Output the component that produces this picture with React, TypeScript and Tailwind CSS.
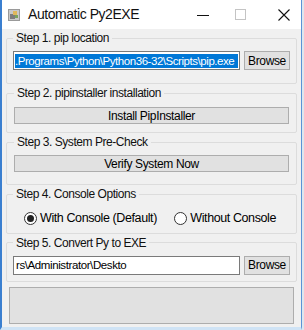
import React, { useState } from "react";

const font = { fontFamily: '"Liberation Sans", Arial, sans-serif' };

function Group({ title, children, className }: { title: string; children: React.ReactNode; className?: string }) {
  return (
    <fieldset className={`border border-[#dcdcdc] rounded-[2px] px-[6px] ${className ?? ""}`}>
      <legend className="px-[3px] text-[12px] leading-[14px] tracking-[-0.45px] text-[#111]">{title}</legend>
      {children}
    </fieldset>
  );
}

function Button({ label, className }: { label: string; className?: string }) {
  return (
    <div
      className={`h-[17px] bg-[#e1e1e1] border border-[#adadad] flex items-center justify-center text-[12px] tracking-[-0.35px] text-black ${className ?? ""}`}
    >
      {label}
    </div>
  );
}

function Radio({ checked, label, onClick }: { checked: boolean; label: string; onClick: () => void }) {
  return (
    <div className="flex items-center gap-[3px] cursor-default" onClick={onClick}>
      <span className="w-[13px] h-[13px] rounded-full border border-[#333] bg-white flex items-center justify-center">
        {checked && <span className="w-[7px] h-[7px] rounded-full bg-[#222]" />}
      </span>
      <span className="text-[12.5px] tracking-[-0.4px] text-black">{label}</span>
    </div>
  );
}

export default function App() {
  const [withConsole, setWithConsole] = useState(true);

  return (
    <div className="w-[304px] h-[330px] bg-[#dfe6ee] flex" style={font}>
      <div className="w-[302px] h-[330px] border-l-2 border-r border-b-[3px] border-l-[#3a7fd0] border-r-[#5b93d6] border-b-[#cfe3f5] flex flex-col">
        {/* title bar */}
        <div className="h-[29px] bg-white flex items-center shrink-0">
          <svg width="12" height="12" viewBox="0 0 12 12" className="ml-[6px] mr-[8px]">
            <rect x="0.5" y="0.5" width="11" height="11" fill="#c9c9c9" stroke="#9a9a9a" />
            <rect x="2" y="5" width="5" height="5" fill="#7d7d7d" />
            <rect x="5" y="2" width="4" height="4" fill="#e0b85a" />
            <rect x="7" y="6" width="3" height="3" fill="#7aa35c" />
          </svg>
          <span className="text-[14px] text-[#111] tracking-[-0.45px]">Automatic Py2EXE</span>
          <div className="ml-auto flex items-center">
            <svg width="12" height="12" viewBox="0 0 12 12" className="mr-[26px]">
              <line x1="0" y1="6.5" x2="12" y2="6.5" stroke="#111" strokeWidth="1" />
            </svg>
            <svg width="11" height="11" viewBox="0 0 11 11" className="mr-[32px]">
              <rect x="0.5" y="0.5" width="10" height="10" fill="none" stroke="#c4c4c4" />
            </svg>
            <svg width="12" height="12" viewBox="0 0 12 12" className="mr-[11px]">
              <path d="M0.5 0.5 L11.5 11.5 M11.5 0.5 L0.5 11.5" stroke="#111" strokeWidth="1.1" />
            </svg>
          </div>
        </div>

        {/* body */}
        <div className="flex-1 bg-[#f0f0f0] px-[4px] pt-[2px] flex flex-col gap-[2px]">
          <Group title="Step 1. pip location" className="pt-[6px] pb-[13px]">
            <div className="flex items-center gap-[4px]">
              <div className="w-[227px] shrink-0 h-[19px] bg-white border border-[#7a7a7a] flex items-center px-[1px] overflow-hidden">
                <span className="bg-[#0078d7] text-white text-[11.5px] leading-[14px] tracking-[-0.45px] whitespace-nowrap w-full">
                  .Programs\Python\Python36-32\Scripts\pip.exe
                </span>
              </div>
              <Button label="Browse" className="w-[46px] shrink-0 h-[19px]" />
            </div>
          </Group>

          <Group title="Step 2. pipinstaller installation" className="pt-[7px] pb-[8px] px-[7px]">
            <Button label="Install PipInstaller" />
          </Group>

          <Group title="Step 3. System Pre-Check" className="pt-[6px] pb-[12px] px-[7px]">
            <Button label="Verify System Now" />
          </Group>

          <Group title="Step 4. Console Options" className="pt-[8px] pb-[5px]">
            <div className="flex items-center pl-[11px] pr-[14px]">
              <Radio checked={withConsole} label="With Console (Default)" onClick={() => setWithConsole(true)} />
              <div className="ml-auto">
                <Radio checked={!withConsole} label="Without Console" onClick={() => setWithConsole(false)} />
              </div>
            </div>
          </Group>

          <Group title="Step 5. Convert Py to EXE" className="pt-[6px] pb-[6px]">
            <div className="flex items-center gap-[4px]">
              <div className="w-[227px] shrink-0 h-[19px] bg-white border border-[#7a7a7a] flex items-center px-[2px] overflow-hidden">
                <span className="text-[11.5px] tracking-[-0.4px] text-black whitespace-nowrap">rs\Administrator\Deskto</span>
              </div>
              <Button label="Browse" className="w-[46px] shrink-0 h-[19px]" />
            </div>
          </Group>

          <div className="mt-[3px] mx-[3px] h-[37px] bg-[#e1e1e1] border border-[#adadad]" />
        </div>
      </div>
    </div>
  );
}
